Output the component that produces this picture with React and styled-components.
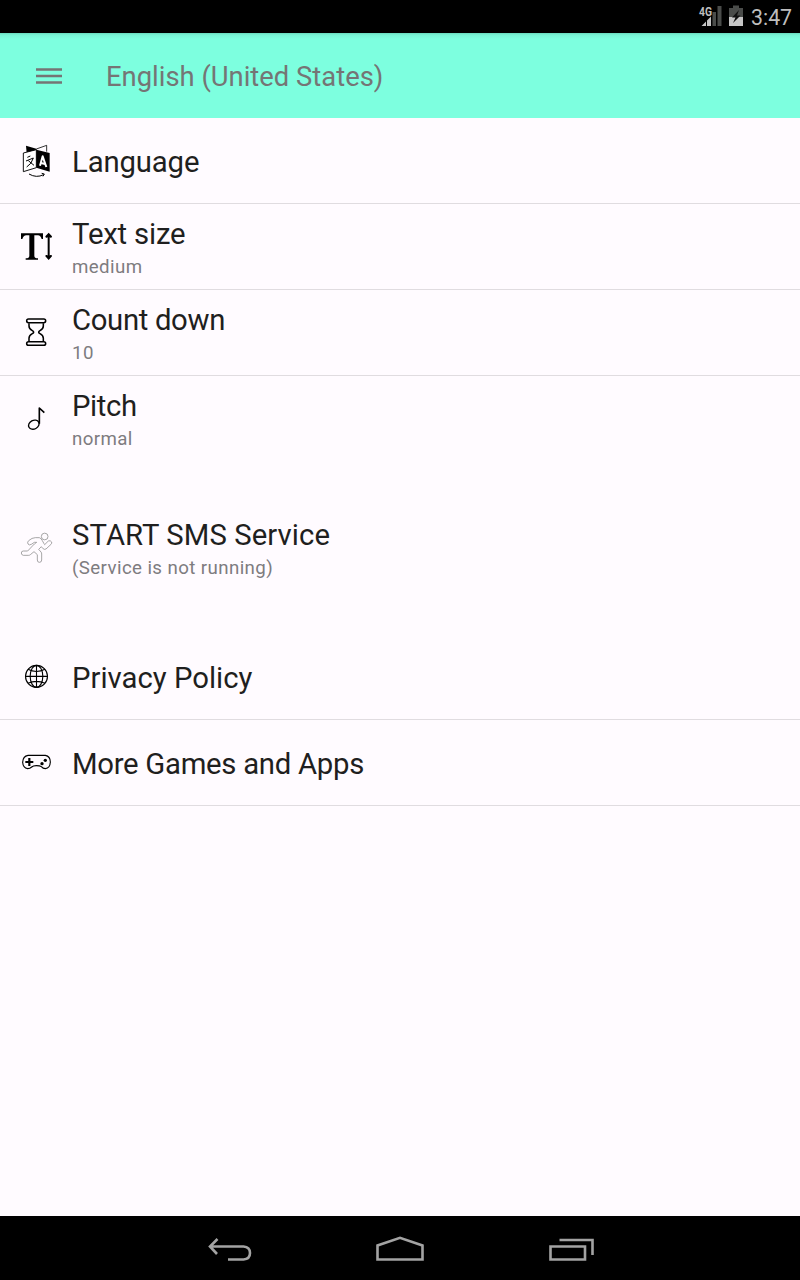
import React from "react";
import styled, { createGlobalStyle } from "styled-components";

const GlobalStyle = createGlobalStyle`
  * { box-sizing: border-box; }
  body { margin: 0; background: #fffbff; font-family: Roboto, "Liberation Sans", sans-serif; }
`;
const Screen = styled.div`
  display: flex; flex-direction: column; width: 800px; height: 1280px;
  background: #fffbff; overflow: hidden;
`;
const StatusBar = styled.div`
  display: flex; justify-content: flex-end; height: 33px; flex: none;
  background: #000; padding-right: 7px;
`;
const StatusIcons = styled.svg`
  width: 60px; height: 33px; display: block; margin-right: 1px;
`;
const Clock = styled.div`
  width: 42px; font-size: 21.3px; line-height: 36px; color: #bebebe;
  white-space: nowrap;
`;
const Toolbar = styled.header`
  display: flex; align-items: center; height: 85px; flex: none; padding-left: 36px;
  background: linear-gradient(#6ad9bd 0, #78f4d5 2px, #7dffdf 6px, #7dffdf 100%);
`;
const MenuIcon = styled.svg`
  width: 26px; height: 16px; display: block; margin-right: 44px;
`;
const Heading = styled.h1`
  margin: 2px 0 0; font-weight: 400; font-size: 27.4px; line-height: 32px;
  color: #757575;
`;
const Row = styled.div`
  display: flex; align-items: center; height: 86px; flex: none; padding-left: 10px;
  margin-bottom: ${(p) => (p.$gap ? "43px" : 0)};
  border-bottom: 1px solid ${(p) => (p.$gap ? "transparent" : "#e0dce0")};
`;
const RowIcon = styled.svg`
  width: 60px; height: 50px; display: block; margin: 1px 2px 0 0; flex: none;
`;
const Labels = styled.div`
  display: flex; flex-direction: column; padding-top: ${(p) => (p.$double ? 0 : "2px")};
`;
const Title = styled.div`
  font-size: 29.3px; line-height: 36px; letter-spacing: ${(p) => p.$tracking || 0}px; color: #1f1f20;
`;
const Summary = styled.div`
  font-size: 18.7px; line-height: 22px; margin-top: 4px; letter-spacing: 0.4px; color: #7e7c7f;
`;
const NavBar = styled.nav`
  display: flex; justify-content: center; height: 64px; margin-top: auto; background: #000;
`;
const NavIcon = styled.svg`
  width: 172px; height: 64px; display: block; fill: none; stroke: #a3a3a3; stroke-width: 2.6;
`;

const icons = {
  language: (
    <g transform="translate(0 -3)" strokeLinejoin="round">
      <path d="M48 32 79 41V47L50 54Z" fill="#000" />
      <path d="M79 42 110 31V50" fill="none" stroke="#000" strokeWidth="2.4" />
      <path d="M40 54 79 44V98L40 110Z" fill="#fff" stroke="#000" strokeWidth="2.8" />
      <path d="M79 44 119 54V110L79 98Z" fill="#000" />
      <path d="M52 67 61 63M48 78 70 69Q65 87 50 96M55 77 72 91" fill="none" stroke="#000" strokeWidth="3" />
      <path d="M90 92 98 64 109 96M93 84 105 87" fill="none" stroke="#fff" strokeWidth="6" />
      <path d="M57 117Q79 130 101 119M95 115 103 117 99 124" fill="none" stroke="#000" strokeWidth="3" />
    </g>
  ),
  size: (
    <g>
      <path d="M33 34H99V51H95Q92 41 84 40H73V101Q73 109 84 109V113H47V109Q58 109 58 101V40H49Q40 41 37 51H33Z" />
      <path d="M116 39V107" stroke="#000" strokeWidth="6" />
      <path d="M116 32 126 43Q126 48 122 47L116 45 110 47Q106 48 106 43ZM116 114 126 103Q126 98 122 99L116 101 110 99Q106 98 106 103Z" />
    </g>
  ),
  hourglass: (
    <g fill="none" stroke="#000" strokeWidth="4.6">
      <rect x="50" y="33" width="57" height="11" rx="5.5" />
      <rect x="50" y="101" width="57" height="11" rx="5.5" />
      <path d="M57 46V54Q57 63 67 68Q75 73 67 77Q57 82 57 91V99M100 46V54Q100 63 90 68Q82 73 90 77Q100 82 100 91V99" />
    </g>
  ),
  note: (
    <g fill="none" stroke="#000" strokeWidth="5">
      <ellipse cx="71.5" cy="92" rx="16.5" ry="13" transform="rotate(-28 71.5 92)" strokeWidth="4" />
      <path d="M88 89V42L103 56" strokeLinejoin="round" />
    </g>
  ),
  runner: (
    <g transform="translate(0 -1)" fill="none" stroke="#8c8c8c" strokeWidth="2.3" strokeLinejoin="round">
      <circle cx="104" cy="41.500" r="10" />
      <path d="M54 64Q51 58 56 54Q66 45 76 45H88Q93 46 97 54L102 63 104 66 115 55Q121 52 125 58Q126 62 123 65L108 79Q103 82 98 77L94 72 86 80 93 88Q95 90 95 94V112Q95 119 88 119Q82 119 82 112V96L72 87 61 96Q59 98 56 98H40Q34 97 34 91Q34 85 40 85H53L73 64 80 59H73L64 65Q57 69 54 64Z" />
    </g>
  ),
  globe: (
    <g fill="none" stroke="#000" strokeWidth="3.3">
      <circle cx="79.500" cy="73" r="33" />
      <ellipse cx="79.500" cy="73" rx="19" ry="33" />
      <path d="M79.500 40V106M46 73H113M54 52Q79 65 105 52M54 94Q79 82 105 94" />
    </g>
  ),
  gamepad: (
    <g>
      <path d="M54 52H106Q121 55 121 72Q120 91 106 92Q99 92 94 86Q90 83 79 83Q69 83 65 87Q60 92 53 92Q39 90 38 73Q39 54 54 52Z" fill="none" stroke="#000" strokeWidth="3.4" />
      <path d="M58 60V84M46 72H70" stroke="#000" strokeWidth="6.500" />
      <circle cx="96" cy="77" r="5" />
      <circle cx="106" cy="67" r="5" />
    </g>
  ),
};

const items = [
  { icon: "language", title: "Language", tracking: -0.14 },
  { icon: "size", title: "Text size", summary: "medium", tracking: -0.18 },
  { icon: "hourglass", title: "Count down", summary: "10", tracking: -0.34 },
  { icon: "note", title: "Pitch", summary: "normal", gap: true, tracking: -0.4 },
  { icon: "runner", title: "START SMS Service", summary: "(Service is not running)", gap: true, tracking: 0.07 },
  { icon: "globe", title: "Privacy Policy" },
  { icon: "gamepad", title: "More Games and Apps", tracking: -0.28 },
];

const NetworkLabel = styled.text`
  font: 700 12.5px Roboto, sans-serif; fill: #bebebe;
`;

export default function App() {
  return (
    <Screen>
      <GlobalStyle />
      <StatusBar>
        <StatusIcons viewBox="690 0 60 33">
          <path d="M712.500 12H716V26H712.500ZM717.500 6H721.500V26H717.500Z" fill="#4a4c4a" />
          <path d="M701.500 26 706 21.500V26ZM707 20.500 711 16.500V26H707Z" fill="#c6c6c6" />
          <NetworkLabel x="699" y="15.500" textLength="13" lengthAdjust="spacingAndGlyphs">4G</NetworkLabel>
          <path d="M733 5.500H739V8H743V17H729V8H733Z" fill="#4a4c4a" />
          <path d="M729 17H743V26H729Z" fill="#c6c6c6" />
          <path d="M739 10 732 17.500H735.500L733 23 740.500 15.500H737Z" fill="#111" />
        </StatusIcons>
        <Clock>3:47</Clock>
      </StatusBar>
      <Toolbar>
        <MenuIcon viewBox="0 0 26 16">
          <path d="M0 1.500H26M0 8H26M0 14.500H26" stroke="#757575" strokeWidth="2.700" />
        </MenuIcon>
        <Heading>English (United States)</Heading>
      </Toolbar>
      {items.map((item) => (
        <Row key={item.title} $gap={item.gap}>
          <RowIcon viewBox="0 0 180 150">{icons[item.icon]}</RowIcon>
          <Labels $double={!!item.summary}>
            <Title $tracking={item.tracking}>{item.title}</Title>
            {item.summary && <Summary>{item.summary}</Summary>}
          </Labels>
        </Row>
      ))}
      <NavBar>
        <NavIcon viewBox="142 1216 172 64">
          <path d="M210 1246.500H243.500Q250 1247 250 1253Q250 1259 243.500 1259.500H228M217.500 1239 210 1246.500 217 1254" />
        </NavIcon>
        <NavIcon viewBox="314 1216 172 64">
          <path d="M377.500 1259.500V1245.500L400 1237.800 422.500 1245.500V1259.500Z" />
        </NavIcon>
        <NavIcon viewBox="486 1216 172 64">
          <path d="M550.500 1246.500H585V1259.500H550.500ZM559.500 1240H592.500V1255" />
        </NavIcon>
      </NavBar>
    </Screen>
  );
}
